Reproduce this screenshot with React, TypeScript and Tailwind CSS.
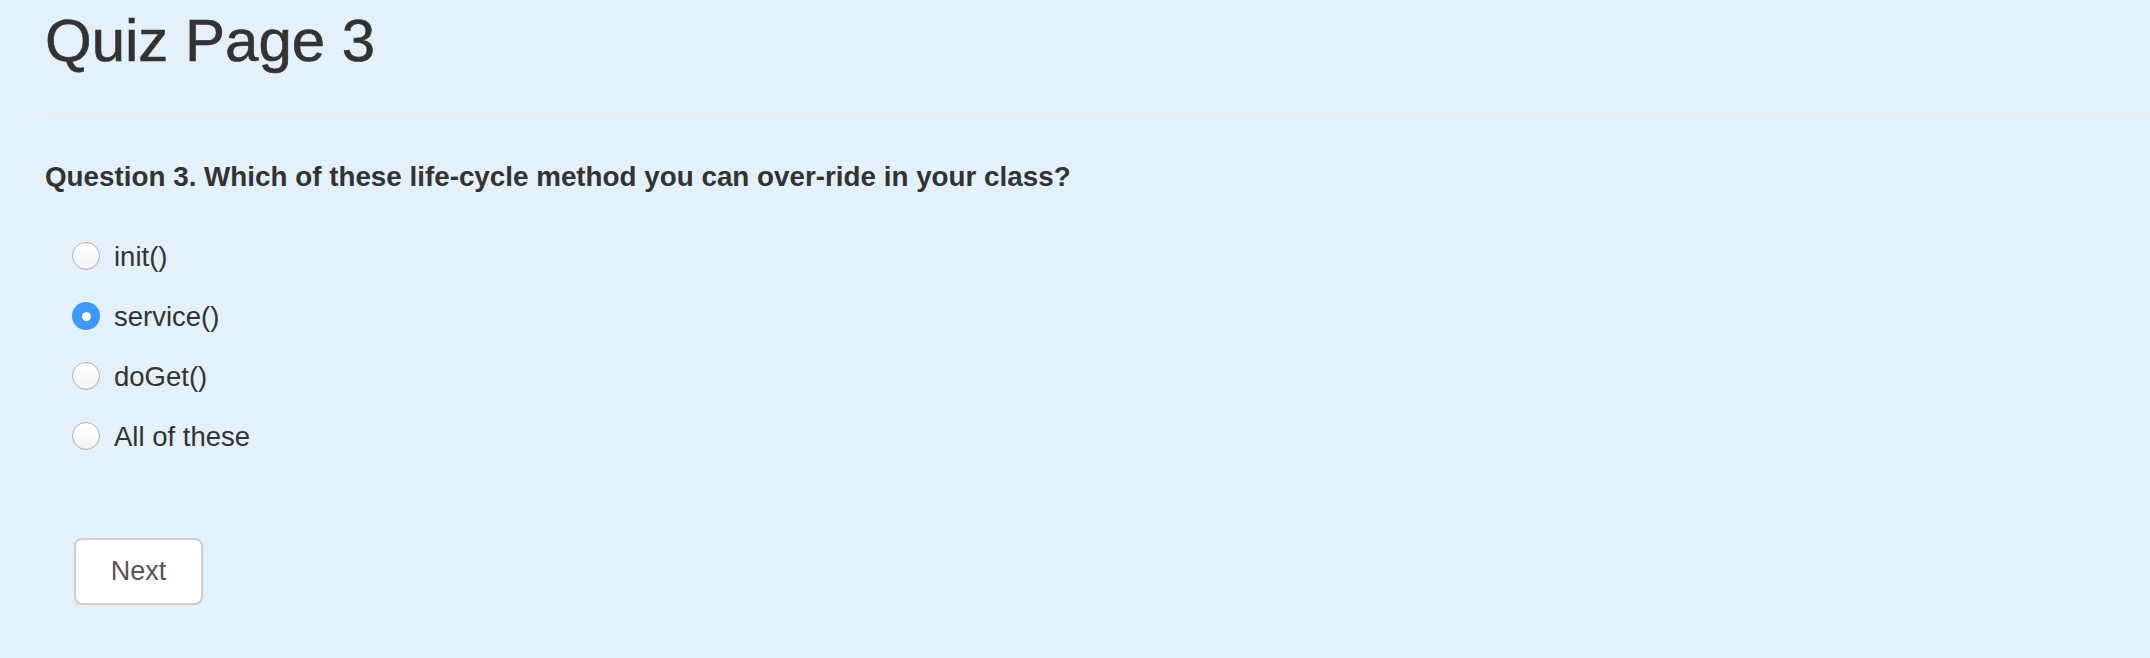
import React, { useState } from "react";

const options = ["init()", "service()", "doGet()", "All of these"];

function Radio({ checked }: { checked: boolean }) {
  if (checked) {
    return (
      <span className="flex h-[28px] w-[28px] shrink-0 items-center justify-center rounded-full bg-[#3d98f8]">
        <span className="h-[9px] w-[9px] rounded-full bg-white" />
      </span>
    );
  }
  return (
    <span className="h-[28px] w-[28px] shrink-0 rounded-full border-[1.5px] border-[#b4b4b4] bg-gradient-to-b from-white to-[#f4f4f4] shadow-[inset_0_-1px_1px_rgba(0,0,0,0.05)]" />
  );
}

export default function App() {
  const [selected, setSelected] = useState(1);
  return (
    <div
      className="min-h-screen bg-[#e3f1fc] pt-[8px] text-[#333333]"
      style={{ fontFamily: '"Liberation Sans", Arial, Helvetica, sans-serif' }}
    >
      <div className="pl-[44px]">
        <h1 className="pl-[1px] text-[60px] font-normal leading-[66px] [-webkit-text-stroke:0.6px_#333333]">Quiz Page 3</h1>
        <div className="mt-[40px] h-[2px] w-full bg-[#ebebeb]" />
        <h4 className="mt-[45px] pl-[1px] text-[27.8px] font-bold leading-[31px]">
          Question 3. Which of these life-cycle method you can over-ride in your class?
        </h4>
        <div className="mt-[34px] flex flex-col pl-[28px]">
          {options.map((o, i) => (
            <label
              key={o}
              className="flex h-[60px] cursor-pointer items-center gap-[14px]"
              onClick={() => setSelected(i)}
            >
              <Radio checked={selected === i} />
              <span className="text-[27.5px] leading-[27px]">{o}</span>
            </label>
          ))}
        </div>
        <button className="ml-[30px] mt-[72px] flex h-[67px] w-[129px] items-center justify-center rounded-[8px] border-2 border-[#cccccc] bg-white text-[27px] leading-[27px] text-[#555555]">
          Next
        </button>
      </div>
    </div>
  );
}
